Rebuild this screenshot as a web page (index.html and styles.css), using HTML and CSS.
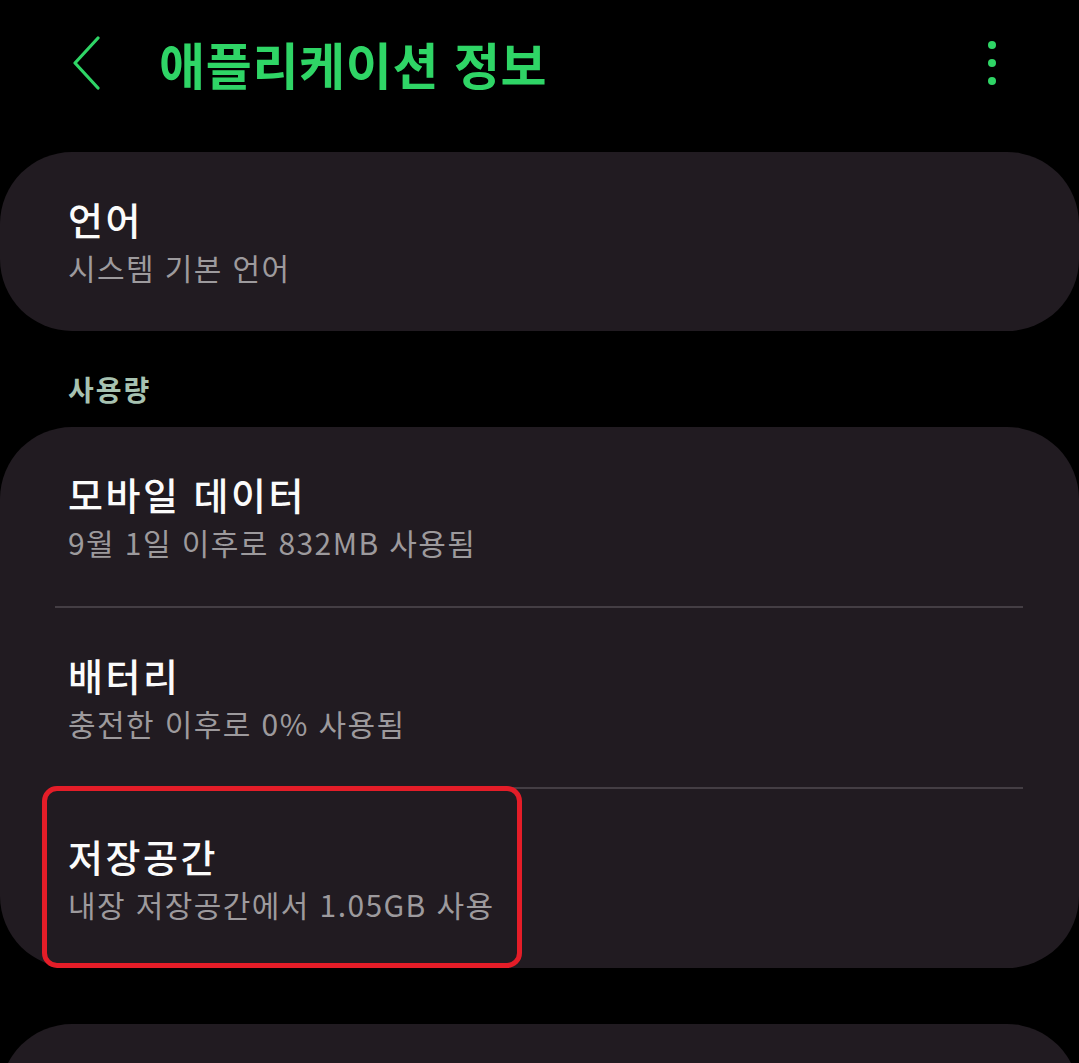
FILE: index.html
```html
<!DOCTYPE html>
<html lang="ko">
<head>
<meta charset="utf-8">
<link rel="stylesheet" href="styles.css">
</head>
<body>
<header class="appbar">
  <svg class="back" width="32" height="54" viewBox="0 0 32 54">
    <path d="M27 2 L4 27 L27 52" fill="none" stroke="#2fd566" stroke-width="3.2" stroke-linecap="round" stroke-linejoin="round"/>
  </svg>
  <h1 class="title">애플리케이션 정보</h1>
  <div class="kebab"><span></span><span></span><span></span></div>
</header>

<section class="card">
  <div class="row">
    <div class="row-title">언어</div>
    <div class="row-sub">시스템 기본 언어</div>
  </div>
</section>

<div class="section-label">사용량</div>

<section class="card">
  <div class="row">
    <div class="row-title">모바일 데이터</div>
    <div class="row-sub">9월 1일 이후로 832MB 사용됨</div>
  </div>
  <div class="divider"></div>
  <div class="row">
    <div class="row-title">배터리</div>
    <div class="row-sub">충전한 이후로 0% 사용됨</div>
  </div>
  <div class="divider"></div>
  <div class="row highlighted">
    <div class="row-title">저장공간</div>
    <div class="row-sub">내장 저장공간에서 1.05GB 사용</div>
    <div class="mark"></div>
  </div>
</section>

<section class="card card-next"></section>
</body>
</html>
```

FILE: styles.css
```css
* { box-sizing: border-box; }
html, body {
  margin: 0;
  padding: 0;
  background: #000;
  overflow: hidden;
}
body {
  width: 1079px;
  height: 1063px;
  font-family: "Noto Sans CJK KR", "Noto Sans", sans-serif;
  color: #fff;
}
.appbar {
  height: 126px;
  display: flex;
  align-items: center;
  padding-left: 71px;
  padding-right: 83px;
  margin-bottom: 26px;
}
.back { flex: none; display: block; }
.title {
  margin: 0 0 0 56px;
  flex: 1;
  font-size: 50px;
  font-weight: 700;
  letter-spacing: 0.7px;
  color: #2fd566;
  line-height: 1;
}
.kebab {
  display: flex;
  flex-direction: column;
  gap: 10px;
  align-items: center;
}
.kebab span {
  width: 8px;
  height: 8px;
  border-radius: 50%;
  background: #2fd566;
}
.card {
  background: #211b21;
  border-radius: 72px;
}
.row {
  height: 179px;
  padding: 40px 68px 0;
  position: relative;
}
.row-title {
  font-size: 38px;
  font-weight: 500;
  line-height: 54px;
  letter-spacing: 2.5px;
  color: #fbfbfb;
}
.row-sub {
  font-size: 30px;
  font-weight: 400;
  line-height: 42px;
  letter-spacing: 1.4px;
  color: #9d9a9d;
}
.divider {
  height: 2px;
  margin: 0 56px 0 55px;
  background: #443e44;
}
.section-label {
  padding: 40px 68px 20px;
  font-size: 28px;
  font-weight: 700;
  line-height: 36px;
  letter-spacing: 2px;
  color: #a7c2b1;
}
.mark {
  position: absolute;
  left: 42px;
  top: -3px;
  width: 480px;
  height: 182px;
  border: 5px solid #e41d28;
  border-radius: 15px;
}
.card-next {
  margin-top: 56px;
  height: 200px;
}
```
